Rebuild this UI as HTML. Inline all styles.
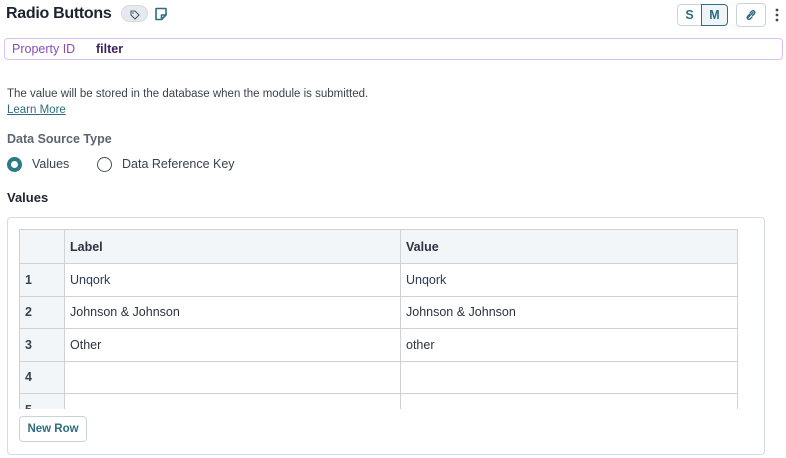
<!DOCTYPE html>
<html><head><meta charset="utf-8">
<style>
*{box-sizing:border-box;margin:0;padding:0}
body{width:786px;height:458px;background:#fff;font-family:"Liberation Sans",Arial,sans-serif;color:#2c3440;position:relative;overflow:hidden}
.abs{position:absolute}
.title{left:6px;top:5px;font-size:16px;font-weight:bold;color:#1d2430;letter-spacing:-0.3px}
.tag{left:121px;top:5px;width:27px;height:17px;border-radius:9px;background:#e6eaee;border:1px solid #d5dbe0}
.pid{left:4px;top:38px;width:779px;height:22px;border:1px solid #dcc0ef;border-radius:4px}
.pid span{position:absolute;top:3px;font-size:12.5px}
.btn{border:1px solid #c9d3da;border-radius:4px;background:#fff}
.txt{font-size:11.5px;color:#3b434d}
table{border-collapse:collapse;position:absolute;left:19px;top:229px;width:719px;font-size:12.5px}
td{border:1px solid #cfd3d7;height:32.5px;padding-left:5px;vertical-align:middle}
tr.h td{background:#f3f6f9;font-weight:bold;color:#2c3440;height:34px}
td.n{width:45px;background:#f3f6f9;font-weight:bold;color:#3a424c}
.v{color:#2b3a5c}
</style></head><body>
<div class="abs title">Radio Buttons</div>
<div class="abs tag"><svg width="27" height="17" viewBox="0 0 27 17"><path d="M9 5h4l4 4-4 4-4-4z" fill="none" stroke="#4a5a6a" stroke-width="1.1"/><circle cx="11" cy="7" r="0.8" fill="#4a5a6a"/></svg></div>
<svg class="abs" style="left:154px;top:7px" width="14" height="14" viewBox="0 0 14 14"><path d="M2 1.5h10v6.5l-4.5 4.5H2z M7.5 12.5V8h4.5" fill="none" stroke="#2f6d80" stroke-width="1.6" stroke-linejoin="round"/></svg>

<div class="abs btn" style="left:677px;top:4px;width:25px;height:22px;border-radius:4px 0 0 4px;font-size:12.5px;font-weight:bold;color:#2f6d80;text-align:center;line-height:20px">S</div>
<div class="abs btn" style="left:701px;top:4px;width:27px;height:22px;border-radius:0 4px 4px 0;background:#eef4f7;border-color:#2f6d80;font-size:12.5px;font-weight:bold;color:#2f6d80;text-align:center;line-height:20px">M</div>
<div class="abs btn" style="left:736px;top:3px;width:30px;height:24px"><svg width="28" height="22" viewBox="0 0 28 22"><path d="M11 13.5l5-5M12.5 10.5l-2 2a1.8 1.8 0 0 0 2.5 2.5l2-2M15.5 11.5l2-2a1.8 1.8 0 0 0-2.5-2.5l-2 2" fill="none" stroke="#2f6d80" stroke-width="1.4" stroke-linecap="round"/></svg></div>
<svg class="abs" style="left:775px;top:8px" width="4" height="14"><circle cx="2" cy="2" r="1.4" fill="#3a4a58"/><circle cx="2" cy="7" r="1.4" fill="#3a4a58"/><circle cx="2" cy="12" r="1.4" fill="#3a4a58"/></svg>

<div class="abs pid"><span style="left:7px;color:#8b4bbd">Property ID</span><span style="left:91px;color:#3d1f5c;font-weight:bold">filter</span></div>

<div class="abs txt" style="left:7px;top:88px">The value will be stored in the database when the module is submitted.</div>
<div class="abs txt" style="left:7px;top:104px;color:#2f6d80;text-decoration:underline">Learn More</div>

<div class="abs" style="left:7px;top:132px;font-size:12.5px;font-weight:bold;color:#5c6570">Data Source Type</div>
<div class="abs" style="left:7px;top:157px;width:15px;height:15px;border-radius:50%;border:4.5px solid #2a7b86"></div>
<div class="abs" style="left:32px;top:157px;font-size:12.5px;color:#3a424c">Values</div>
<div class="abs" style="left:97px;top:157px;width:15px;height:15px;border-radius:50%;border:1.2px solid #4a525c"></div>
<div class="abs" style="left:122px;top:157px;font-size:12.5px;color:#3a424c">Data Reference Key</div>

<div class="abs" style="left:7px;top:190px;font-size:13px;font-weight:bold;color:#1d2430">Values</div>
<div class="abs" style="left:7px;top:217px;width:758px;height:238px;border:1px solid #d6dbe0;border-radius:4px"></div>
<div class="abs" style="left:19px;top:229px;width:720px;height:180px;overflow:hidden">
<table style="left:0;top:0">
<tr class="h"><td class="n"></td><td style="width:336px">Label</td><td>Value</td></tr>
<tr><td class="n">1</td><td class="v">Unqork</td><td class="v">Unqork</td></tr>
<tr><td class="n">2</td><td>Johnson &amp; Johnson</td><td>Johnson &amp; Johnson</td></tr>
<tr><td class="n">3</td><td>Other</td><td>other</td></tr>
<tr><td class="n">4</td><td></td><td></td></tr>
<tr><td class="n">5</td><td></td><td></td></tr>
</table></div>
<div class="abs btn" style="left:19px;top:416px;width:68px;height:26px;font-size:11.5px;font-weight:bold;color:#2f6d80;text-align:center;line-height:24px">New Row</div>
</body></html>
